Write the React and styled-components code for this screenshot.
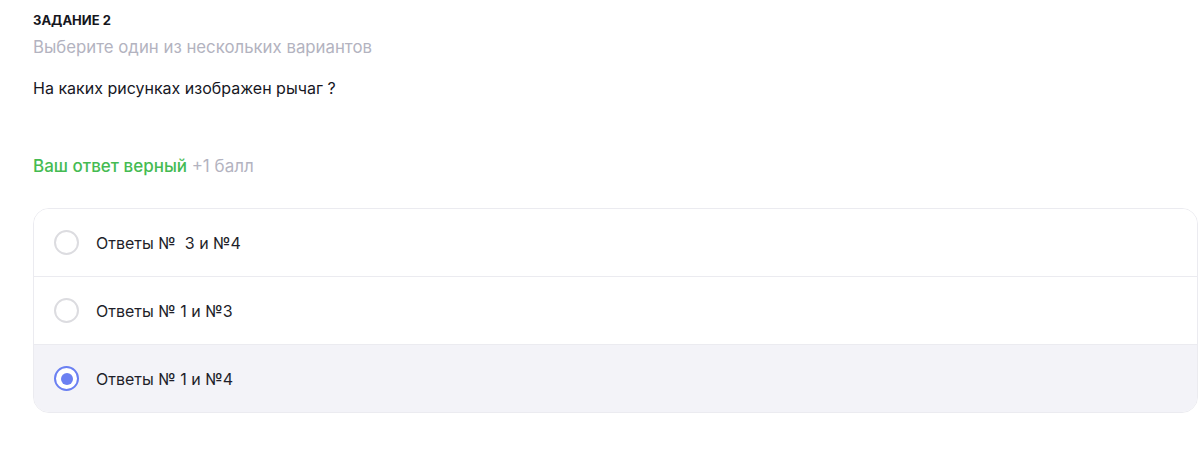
import React from 'react'
import styled, { createGlobalStyle } from 'styled-components'

const GlobalStyle = createGlobalStyle`
  body {
    margin: 0;
    background: #ffffff;
    font-family: Inter, "Noto Sans", sans-serif;
  }
`

const Page = styled.div`
  padding: 12px 2px 0 33px;
`

const TaskLabel = styled.div`
  font-size: 13px;
  line-height: 16px;
  font-weight: 700;
  color: #16161d;
`

const Hint = styled.div`
  margin-top: 7px;
  font-size: 16.8px;
  line-height: 24px;
  color: #b3b3c0;
`

const Question = styled.div`
  margin-top: 17px;
  font-size: 16px;
  line-height: 24px;
  font-weight: 400;
  color: #17171f;
`

const Result = styled.div`
  margin-top: 54px;
  font-size: 17px;
  line-height: 24px;
  font-weight: 500;
  color: #45bb52;
`

const Points = styled.span`
  color: #b3b3c0;
  font-weight: 400;
`

const Options = styled.div`
  margin-top: 30px;
  border: 1px solid #ebebf0;
  border-radius: 16px;
  overflow: hidden;
`

const Option = styled.label`
  display: flex;
  align-items: center;
  gap: 17px;
  height: 67px;
  padding-left: 20px;
  background: ${p => (p.$checked ? '#f3f3f8' : '#ffffff')};
  & + & {
    border-top: 1px solid #ebebf0;
  }
`

const Radio = styled.span`
  box-sizing: border-box;
  width: 25px;
  height: 25px;
  border-radius: 50%;
  border: ${p => (p.$checked ? '2.5px solid #6b80f2' : '2px solid #dcdce0')};
  background: #ffffff;
  display: flex;
  align-items: center;
  justify-content: center;
  &::after {
    content: '';
    display: ${p => (p.$checked ? 'block' : 'none')};
    width: 12px;
    height: 12px;
    border-radius: 50%;
    background: #6b80f2;
  }
`

const OptionText = styled.span`
  font-size: 16px;
  font-weight: 400;
  color: #1f1f2a;
  white-space: pre;
`

const options = [
  { text: 'Ответы №  3 и №4', checked: false },
  { text: 'Ответы № 1 и №3', checked: false },
  { text: 'Ответы № 1 и №4', checked: true },
]

const App = () => {
  return (
    <>
      <GlobalStyle />
      <Page>
        <TaskLabel>ЗАДАНИЕ 2</TaskLabel>
        <Hint>Выберите один из нескольких вариантов</Hint>
        <Question>На каких рисунках изображен рычаг ?</Question>
        <Result>
          Ваш ответ верный <Points>+1 балл</Points>
        </Result>
        <Options>
          {options.map(o => (
            <Option key={o.text} $checked={o.checked}>
              <Radio $checked={o.checked} />
              <OptionText>{o.text}</OptionText>
            </Option>
          ))}
        </Options>
      </Page>
    </>
  )
}

export default App
